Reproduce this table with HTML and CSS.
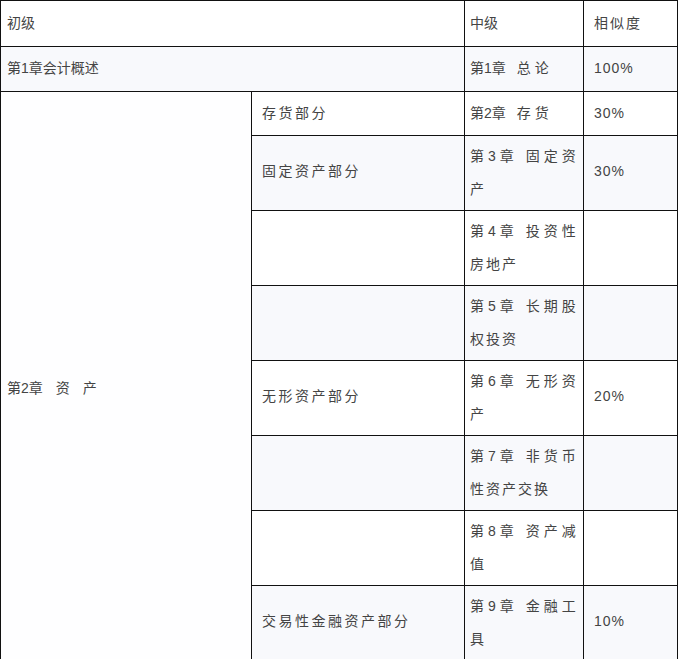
FILE: index.html
```html
<!DOCTYPE html>
<html lang="zh">
<head>
<meta charset="utf-8">
<link rel="stylesheet" href="styles.css">
</head>
<body>
<table class="cmp">
  <colgroup>
    <col class="c1"><col class="c2"><col class="c3"><col class="c4">
  </colgroup>
  <tr class="hdr">
    <td colspan="2" class="p1">初级</td>
    <td class="p3">中级</td>
    <td class="p4 sp2">相似度</td>
  </tr>
  <tr class="alt short">
    <td colspan="2" class="p1">第1章会计概述</td>
    <td class="p3">第1章<span class="gap"></span>总<span class="g"></span>论</td>
    <td class="p4 sp1">100%</td>
  </tr>
  <tr class="short2">
    <td rowspan="8" class="p1 big">第2章<span class="gap2"></span>资<span class="gap2"></span>产</td>
    <td class="p2 sp3">存货部分</td>
    <td class="p3">第2章<span class="gap"></span>存<span class="g"></span>货</td>
    <td class="p4 sp1">30%</td>
  </tr>
  <tr class="alt tall">
    <td class="p2 sp3">固定资产部分</td>
    <td class="p3 sp4">第3章&nbsp;固定资<br><span class="l2">产</span></td>
    <td class="p4 sp1">30%</td>
  </tr>
  <tr class="tall">
    <td class="p2"></td>
    <td class="p3 sp4">第4章&nbsp;投资性<br><span class="l2">房地产</span></td>
    <td class="p4"></td>
  </tr>
  <tr class="alt tall">
    <td class="p2"></td>
    <td class="p3 sp4">第5章&nbsp;长期股<br><span class="l2">权投资</span></td>
    <td class="p4"></td>
  </tr>
  <tr class="tall">
    <td class="p2 sp3">无形资产部分</td>
    <td class="p3 sp4">第6章&nbsp;无形资<br><span class="l2">产</span></td>
    <td class="p4 sp1">20%</td>
  </tr>
  <tr class="alt tall">
    <td class="p2"></td>
    <td class="p3 sp4">第7章&nbsp;非货币<br><span class="l2">性资产交换</span></td>
    <td class="p4"></td>
  </tr>
  <tr class="tall">
    <td class="p2"></td>
    <td class="p3 sp4">第8章&nbsp;资产减<br><span class="l2">值</span></td>
    <td class="p4"></td>
  </tr>
  <tr class="alt tall">
    <td class="p2 sp3">交易性金融资产部分</td>
    <td class="p3 sp4">第9章&nbsp;金融工<br><span class="l2">具</span></td>
    <td class="p4 sp1">10%</td>
  </tr>
</table>
</body>
</html>
```
FILE: styles.css
```css
html, body {
  margin: 0;
  padding: 0;
  background: #ffffff;
}
.cmp {
  border-collapse: collapse;
  table-layout: fixed;
  width: 677px;
  font-family: "Liberation Sans", "Noto Sans CJK SC", sans-serif;
  font-size: 14px;
  color: #444444;
}
.c1 { width: 251px; }
.c2 { width: 213px; }
.c3 { width: 119px; }
.c4 { width: 94px; }
.cmp td {
  border: 1px solid #111111;
  line-height: 33px;
  padding: 6px 0;
  vertical-align: middle;
  white-space: nowrap;
  background: #ffffff;
}
.cmp tr.short td { padding: 5px 0 6px; }
.cmp tr.short2 td { padding: 5px 0 5px; }
.cmp tr.alt td { background: #f8f9fc; }
.cmp tr.tall td { padding: 4px 0 4px; }
.cmp tr.tall td.p2,
.cmp tr.tall td.p4 { padding: 2px 0 6px; }
.cmp tr td.big {
  background: #fefeff;
  padding-top: 24px;
  padding-bottom: 0;
}
.p1 { padding-left: 6px !important; }
.p2 { padding-left: 10px !important; }
.p3 { padding-left: 5px !important; }
.p4 { padding-left: 10px !important; }
.sp1 { letter-spacing: 1px; }
.sp2 { letter-spacing: 2px; }
.sp3 { letter-spacing: 2.5px; }
.sp4 { letter-spacing: 4px; }
.l2 { letter-spacing: 2px; }
.g { display: inline-block; width: 4px; }
.gap { display: inline-block; width: 11px; }
.gap2 { display: inline-block; width: 13px; }
```
